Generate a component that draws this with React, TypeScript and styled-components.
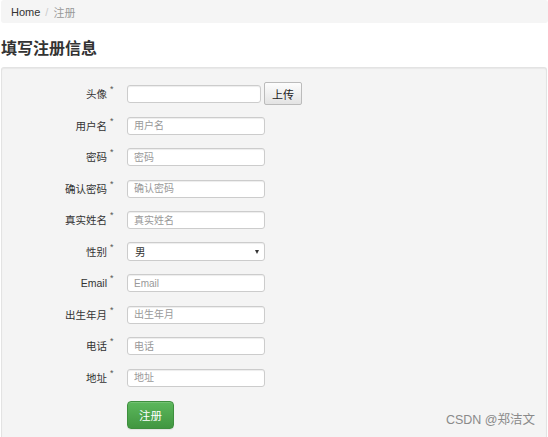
import React from 'react'
import styled, { createGlobalStyle } from 'styled-components'

const GlobalStyle = createGlobalStyle`
  html, body {
    margin: 0;
    padding: 0;
    background: #fff;
    font-family: "Liberation Sans", Arial, "Noto Sans CJK SC", sans-serif;
    color: #333;
  }
  * {
    box-sizing: border-box;
  }
`

const Page = styled.div`
  width: 548px;
  height: 437px;
  overflow: hidden;
  position: relative;
  display: flex;
  flex-direction: column;
`

const Breadcrumb = styled.ol`
  list-style: none;
  margin: 0 0 0 1px;
  padding: 0 10px;
  height: 23px;
  display: flex;
  align-items: center;
  background: #f5f5f5;
  border-radius: 3px;
  font-size: 11px;
`

const Crumb = styled.li<{ $active?: boolean }>`
  color: ${({ $active }) => ($active ? '#999' : '#333')};
`

const Divider = styled.span`
  color: #ccc;
  padding: 0 5px;
`

const Title = styled.h3`
  margin: 16px 0 0 1px;
  height: 28px;
  font-size: 16px;
  font-weight: bold;
  color: #333;
  line-height: 20px;
`

const Well = styled.div`
  flex: 1;
  margin: 0 1px 0 1px;
  padding: 9px 0 0 0;
  background: #f4f4f4;
  border: 1px solid #e3e3e3;
  border-bottom: none;
  border-radius: 3px 3px 0 0;
  box-shadow: inset 0 1px 1px rgba(0, 0, 0, 0.05);
`

const Row = styled.div<{ $first?: boolean }>`
  display: flex;
  align-items: center;
  height: ${({ $first }) => ($first ? '33px' : '31.5px')};
`

const Label = styled.label`
  width: 105px;
  text-align: right;
  font-size: 10.5px;
  color: #333;
  line-height: 14px;
`

const Star = styled.span`
  width: 20px;
  padding-left: 3px;
  font-size: 9px;
  color: #555;
  align-self: center;
  margin-top: -10px;
`

const Input = styled.input<{ $w?: number }>`
  width: ${({ $w }) => $w ?? 138}px;
  height: 18px;
  padding: 0 6px;
  border: 1px solid #ccc;
  border-radius: 3px;
  background: #fff;
  box-shadow: inset 0 1px 1px rgba(0, 0, 0, 0.075);
  font-family: "Liberation Sans", Arial, "Noto Sans CJK SC", sans-serif;
  font-size: 10px;
  color: #555;
  outline: none;
  &::placeholder {
    color: #999;
  }
`

const UploadButton = styled.button`
  margin-left: 3px;
  width: 38px;
  height: 23px;
  padding: 0;
  border: 1px solid #bbb;
  border-radius: 2px;
  background: linear-gradient(#fdfdfd, #e3e3e3);
  font-family: "Liberation Sans", Arial, "Noto Sans CJK SC", sans-serif;
  font-size: 11px;
  color: #222;
`

const Select = styled.div`
  width: 138px;
  height: 19px;
  padding: 0 5px 0 7px;
  border: 1px solid #ccc;
  border-radius: 3px;
  background: #fff;
  box-shadow: inset 0 1px 1px rgba(0, 0, 0, 0.075);
  display: flex;
  align-items: center;
  justify-content: space-between;
  font-size: 10.5px;
  color: #333;
`

const Caret = styled.span`
  width: 0;
  height: 0;
  border-left: 2.5px solid transparent;
  border-right: 2.5px solid transparent;
  border-top: 4px solid #333;
`

const Actions = styled.div`
  padding: 7px 0 0 125px;
`

const Submit = styled.button`
  width: 47px;
  height: 28px;
  padding: 0;
  border: 1px solid #3e8f3e;
  border-radius: 4px;
  background: linear-gradient(#5cb85c, #419641);
  box-shadow: inset 0 1px 0 rgba(255, 255, 255, 0.15), 0 1px 1px rgba(0, 0, 0, 0.075);
  color: #fff;
  font-family: "Liberation Sans", Arial, "Noto Sans CJK SC", sans-serif;
  font-size: 11.5px;
`

const Watermark = styled.div`
  position: absolute;
  right: 13px;
  bottom: 9px;
  font-size: 12.5px;
  color: #8a8a8a;
  font-family: "Liberation Sans", Arial, "Noto Sans CJK SC", sans-serif;
`

const fields = [
  { label: '用户名', placeholder: '用户名' },
  { label: '密码', placeholder: '密码' },
  { label: '确认密码', placeholder: '确认密码' },
  { label: '真实姓名', placeholder: '真实姓名' },
  { label: '性别', select: '男' },
  { label: 'Email', placeholder: 'Email' },
  { label: '出生年月', placeholder: '出生年月' },
  { label: '电话', placeholder: '电话' },
  { label: '地址', placeholder: '地址' }
]

export default function App() {
  return (
    <Page>
      <GlobalStyle />
      <Breadcrumb>
        <Crumb>Home</Crumb>
        <Divider>/</Divider>
        <Crumb $active>注册</Crumb>
      </Breadcrumb>
      <Title>填写注册信息</Title>
      <Well>
        <Row $first>
          <Label>头像</Label>
          <Star>*</Star>
          <Input $w={134} />
          <UploadButton>上传</UploadButton>
        </Row>
        {fields.map(item => (
          <Row key={item.label}>
            <Label>{item.label}</Label>
            <Star>*</Star>
            {item.select ? (
              <Select>
                {item.select}
                <Caret />
              </Select>
            ) : (
              <Input placeholder={item.placeholder} />
            )}
          </Row>
        ))}
        <Actions>
          <Submit>注册</Submit>
        </Actions>
      </Well>
      <Watermark>CSDN @郑洁文</Watermark>
    </Page>
  )
}
